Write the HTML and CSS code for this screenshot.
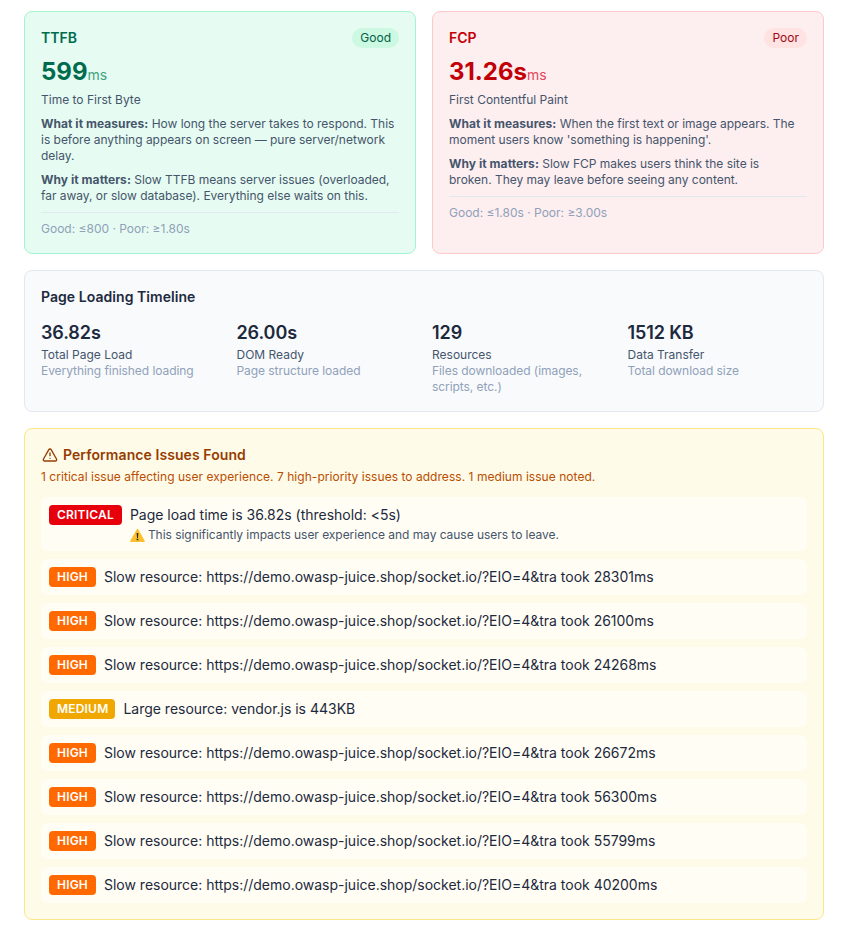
FILE: index.html
```html
<!DOCTYPE html>
<html lang="en">
<head>
  <meta charset="UTF-8">
  <meta name="viewport" content="width=device-width, initial-scale=1.0">
  <title>Performance Report</title>
  <link rel="stylesheet" href="styles.css">
</head>
<body>

  <div class="metrics">
    <div class="metric metric-good">
      <div class="metric-head">
        <span class="metric-name">TTFB</span>
        <span class="pill">Good</span>
      </div>
      <div class="metric-value">599<span class="unit">ms</span></div>
      <div class="metric-label">Time to First Byte</div>
      <p class="metric-text"><strong>What it measures:</strong> How long the server takes to respond. This is before anything appears on screen — pure server/network delay.</p>
      <p class="metric-text"><strong>Why it matters:</strong> Slow TTFB means server issues (overloaded, far away, or slow database). Everything else waits on this.</p>
      <div class="metric-limits">Good: ≤800 · Poor: ≥1.80s</div>
    </div>

    <div class="metric metric-poor">
      <div class="metric-head">
        <span class="metric-name">FCP</span>
        <span class="pill">Poor</span>
      </div>
      <div class="metric-value">31.26s<span class="unit">ms</span></div>
      <div class="metric-label">First Contentful Paint</div>
      <p class="metric-text"><strong>What it measures:</strong> When the first text or image appears. The moment users know 'something is happening'.</p>
      <p class="metric-text"><strong>Why it matters:</strong> Slow FCP makes users think the site is broken. They may leave before seeing any content.</p>
      <div class="metric-limits">Good: ≤1.80s · Poor: ≥3.00s</div>
    </div>
  </div>

  <div class="timeline">
    <h3>Page Loading Timeline</h3>
    <div class="timeline-grid">
      <div>
        <div class="stat-value">36.82s</div>
        <div class="stat-label">Total Page Load</div>
        <div class="stat-sub">Everything finished loading</div>
      </div>
      <div>
        <div class="stat-value">26.00s</div>
        <div class="stat-label">DOM Ready</div>
        <div class="stat-sub">Page structure loaded</div>
      </div>
      <div>
        <div class="stat-value">129</div>
        <div class="stat-label">Resources</div>
        <div class="stat-sub">Files downloaded (images, scripts, etc.)</div>
      </div>
      <div>
        <div class="stat-value">1512 KB</div>
        <div class="stat-label">Data Transfer</div>
        <div class="stat-sub">Total download size</div>
      </div>
    </div>
  </div>

  <div class="issues">
    <h3 class="issues-title">
      <svg class="alert-icon" viewBox="0 0 24 24" fill="none" stroke="currentColor" stroke-width="2" stroke-linecap="round" stroke-linejoin="round">
        <path d="m21.73 18-8-14a2 2 0 0 0-3.48 0l-8 14A2 2 0 0 0 4 21h16a2 2 0 0 0 1.73-3"/>
        <path d="M12 9v4"/>
        <path d="M12 17h.01"/>
      </svg>
      Performance Issues Found
    </h3>
    <p class="issues-summary">1 critical issue affecting user experience. 7 high-priority issues to address. 1 medium issue noted.</p>

    <div class="issue-list">
      <div class="issue">
        <span class="tag tag-critical">Critical</span>
        <div>
          <div>Page load time is 36.82s (threshold: &lt;5s)</div>
          <div class="issue-note">
            <svg class="note-icon" viewBox="0 0 16 16">
              <path d="M8 1.6 15 14H1Z" fill="#fbc02d" stroke="#fbc02d" stroke-width="1.6" stroke-linejoin="round"/>
              <path d="M7.1 5.4h1.8l-.4 5.2h-1ZM7.1 11.4h1.8v1.6H7.1Z" fill="#2b2410"/>
            </svg>
            This significantly impacts user experience and may cause users to leave.
          </div>
        </div>
      </div>
      <div class="issue"><span class="tag tag-high">High</span><div>Slow resource: https://demo.owasp-juice.shop/socket.io/?EIO=4&amp;tra took 28301ms</div></div>
      <div class="issue"><span class="tag tag-high">High</span><div>Slow resource: https://demo.owasp-juice.shop/socket.io/?EIO=4&amp;tra took 26100ms</div></div>
      <div class="issue"><span class="tag tag-high">High</span><div>Slow resource: https://demo.owasp-juice.shop/socket.io/?EIO=4&amp;tra took 24268ms</div></div>
      <div class="issue"><span class="tag tag-medium">Medium</span><div>Large resource: vendor.js is 443KB</div></div>
      <div class="issue"><span class="tag tag-high">High</span><div>Slow resource: https://demo.owasp-juice.shop/socket.io/?EIO=4&amp;tra took 26672ms</div></div>
      <div class="issue"><span class="tag tag-high">High</span><div>Slow resource: https://demo.owasp-juice.shop/socket.io/?EIO=4&amp;tra took 56300ms</div></div>
      <div class="issue"><span class="tag tag-high">High</span><div>Slow resource: https://demo.owasp-juice.shop/socket.io/?EIO=4&amp;tra took 55799ms</div></div>
      <div class="issue"><span class="tag tag-high">High</span><div>Slow resource: https://demo.owasp-juice.shop/socket.io/?EIO=4&amp;tra took 40200ms</div></div>
    </div>
  </div>

</body>
</html>
```

FILE: styles.css
```css
* {
  box-sizing: border-box;
}

body {
  margin: 0;
  padding: 11px 37px 15px 24px;
  font-family: Inter, 'Liberation Sans', sans-serif;
  background: #fff;
  color: #1d293d;
  overflow: hidden;
}

h3 {
  margin: 0;
  font-size: 14px;
  line-height: 20px;
  font-weight: 600;
  letter-spacing: 0.05px;
}

/* metric cards */
.metrics {
  display: grid;
  grid-template-columns: 1fr 1fr;
  gap: 16px;
}

.metric {
  padding: 16px;
  border: 1px solid;
  border-radius: 8px;
}

.metric-good {
  background: #e6fbf1;
  border-color: #a4f4cf;
  --main: #006c4e;
  --unit: #3fa37f;
  --pill-bg: #cdf8e2;
  --pill-text: #006045;
}

.metric-poor {
  background: #fdeeef;
  border-color: #ffc9c9;
  --main: #c10007;
  --unit: #e2475a;
  --pill-bg: #ffe2e2;
  --pill-text: #9f0712;
}

.metric-head {
  display: flex;
  justify-content: space-between;
  align-items: center;
}

.metric-name {
  font-size: 14px;
  line-height: 20px;
  font-weight: 600;
  color: var(--main);
}

.pill {
  padding: 2px 8px;
  border-radius: 10px;
  font-size: 12px;
  line-height: 16px;
  font-weight: 400;
  background: var(--pill-bg);
  color: var(--pill-text);
}

.metric-value {
  margin-top: 8px;
  font-size: 24px;
  line-height: 32px;
  font-weight: 700;
  color: var(--main);
}

.unit {
  font-size: 14px;
  line-height: 16px;
  font-weight: 400;
  color: var(--unit);
}

.metric-label {
  margin-top: 4px;
  font-size: 12px;
  line-height: 16px;
  color: #45556c;
}

.metric-text {
  margin: 8px 0 0;
  padding-right: 3px;
  font-size: 12px;
  line-height: 16px;
  letter-spacing: -0.02px;
  color: #45556c;
}

.metric-text strong {
  font-weight: 700;
  letter-spacing: 0.05px;
}

.metric-limits {
  margin-top: 8px;
  padding-top: 8px;
  border-top: 1px solid #e2e8f0;
  font-size: 12px;
  line-height: 16px;
  color: #90a1b9;
}

/* timeline */
.timeline {
  margin-top: 16px;
  padding: 16px;
  background: #f8fafc;
  border: 1px solid #e2e8f0;
  border-radius: 8px;
}

.timeline-grid {
  display: grid;
  grid-template-columns: repeat(4, 1fr);
  gap: 16px;
  margin-top: 12px;
}

.stat-value {
  font-size: 18px;
  line-height: 28px;
  font-weight: 600;
  letter-spacing: -0.1px;
}

.stat-label {
  font-size: 12px;
  line-height: 16px;
  color: #45556c;
}

.stat-sub {
  font-size: 12px;
  line-height: 16px;
  letter-spacing: -0.06px;
  color: #90a1b9;
}

/* issues */
.issues {
  margin-top: 16px;
  padding: 16px;
  background: #fefbe8;
  border: 1px solid #fde68a;
  border-radius: 8px;
}

.issues-title {
  display: flex;
  align-items: center;
  gap: 5px;
  letter-spacing: 0.08px;
  color: #973c00;
}

.alert-icon {
  width: 16px;
  height: 16px;
  margin-left: 1px;
}

.issues-summary {
  margin: 4px 0 0;
  font-size: 12px;
  line-height: 16px;
  letter-spacing: 0.04px;
  color: #bb4d00;
}

.issue-list {
  display: flex;
  flex-direction: column;
  gap: 8px;
  margin-top: 12px;
}

.issue {
  display: flex;
  align-items: flex-start;
  gap: 8px;
  padding: 8px;
  background: rgba(255, 255, 255, 0.5);
  border-radius: 6px;
  font-size: 14px;
  line-height: 20px;
  letter-spacing: -0.01px;
}

.issue-note {
  display: flex;
  align-items: center;
  gap: 3px;
  margin-top: 2px;
  font-size: 12px;
  line-height: 16px;
  letter-spacing: -0.04px;
  color: #45556c;
}

.note-icon {
  width: 15px;
  height: 15px;
}

.tag {
  flex-shrink: 0;
  padding: 2px 8px;
  border-radius: 4px;
  font-size: 12px;
  line-height: 16px;
  font-weight: 600;
  letter-spacing: 0.2px;
  text-transform: uppercase;
  color: #fff;
}

.tag-critical {
  background: #e7000b;
}

.tag-high {
  background: #ff6900;
}

.tag-medium {
  padding-right: 7px;
  background: #f0a800;
}
```
